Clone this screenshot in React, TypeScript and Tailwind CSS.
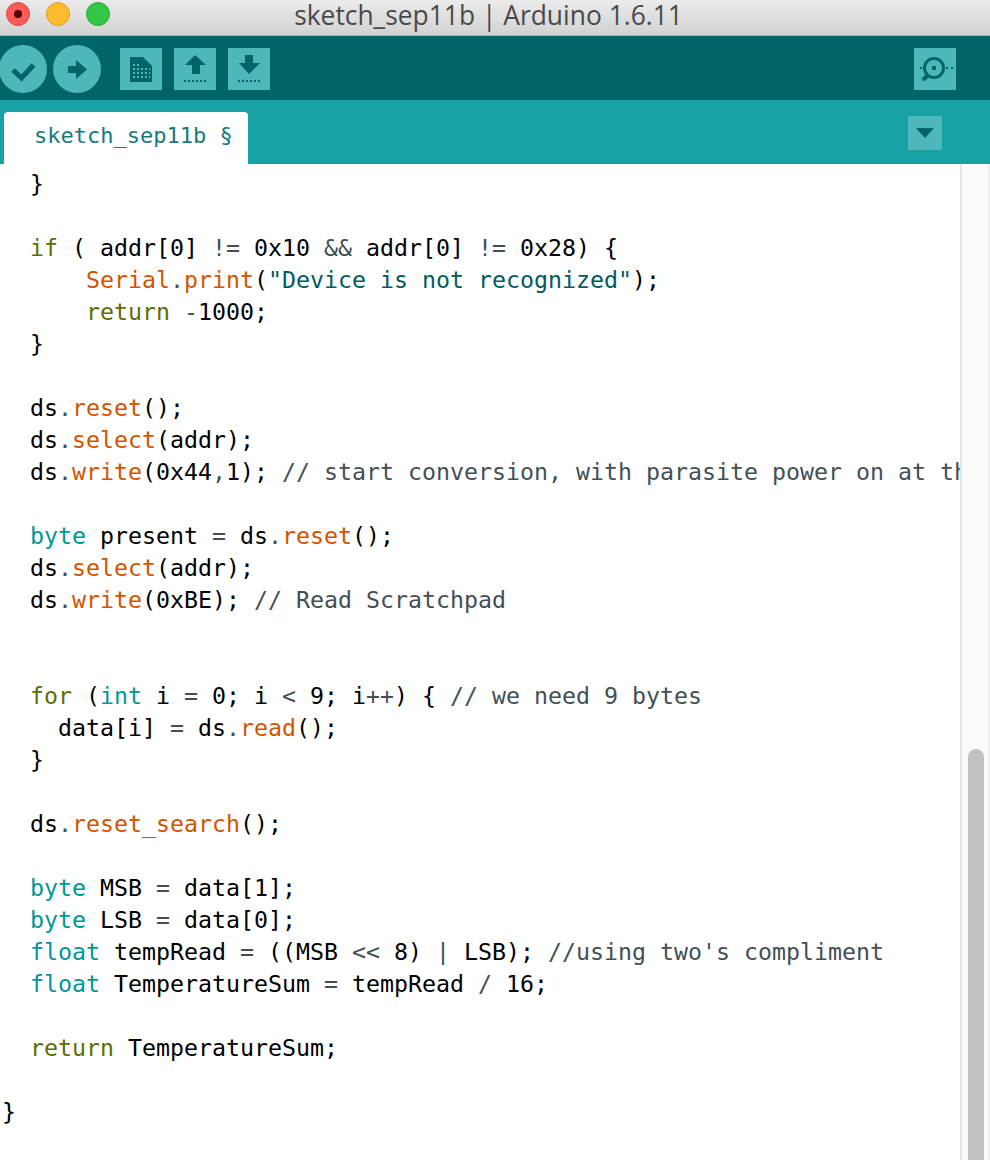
// Arduino IDE 1.6 editor window
const code = [
  "  }",
  "",
  "  if ( addr[0] != 0x10 && addr[0] != 0x28) {",
  '      Serial.print("Device is not recognized");',
  "      return -1000;",
  "  }",
  "",
  "  ds.reset();",
  "  ds.select(addr);",
  "  ds.write(0x44,1); // start conversion, with parasite power on at the end",
  "",
  "  byte present = ds.reset();",
  "  ds.select(addr);",
  "  ds.write(0xBE); // Read Scratchpad",
  "",
  "",
  "  for (int i = 0; i < 9; i++) { // we need 9 bytes",
  "    data[i] = ds.read();",
  "  }",
  "",
  "  ds.reset_search();",
  "",
  "  byte MSB = data[1];",
  "  byte LSB = data[0];",
  "  float tempRead = ((MSB << 8) | LSB); //using two's compliment",
  "  float TemperatureSum = tempRead / 16;",
  "",
  "  return TemperatureSum;",
  "",
  "}",
];

const tokenRe =
  /(\/\/.*$)|("[^"]*")|\b(if|for|return)\b|\b(byte|int|float)\b|\b(Serial|print|reset_search|reset|select|write|read)\b(?=\s*[.(])|(!=|&&|<<|\+\+|[=<|/.,-])/g;

function highlight(line: string) {
  const out: React.ReactNode[] = [];
  let last = 0;
  let m: RegExpExecArray | null;
  tokenRe.lastIndex = 0;
  while ((m = tokenRe.exec(line))) {
    if (m.index > last) out.push(line.slice(last, m.index));
    let cls = "text-[#434f54]";
    if (m[2]) cls = "text-[#005c5f]";
    if (m[3]) cls = "text-[#5e6d03]";
    if (m[4]) cls = "text-[#00979c]";
    if (m[5]) cls = "text-[#d35400]";
    out.push(
      <span key={m.index} className={cls}>
        {m[0]}
      </span>
    );
    last = m.index + m[0].length;
  }
  out.push(line.slice(last));
  return out;
}

function RoundButton({ children }: { children: React.ReactNode }) {
  return (
    <div className="w-12 h-12 shrink-0 rounded-full bg-[#4db7bb] flex items-center justify-center">
      <svg width="48" height="48" viewBox="0 0 48 48" fill="none">
        {children}
      </svg>
    </div>
  );
}

function SquareButton({ children }: { children: React.ReactNode }) {
  return (
    <div className="w-[42px] h-[42px] shrink-0 bg-[#4db7bb]">
      <svg width="42" height="42" viewBox="0 0 42 42" fill="none">
        {children}
      </svg>
    </div>
  );
}

const dark = "#006468";

export default function App() {
  return (
    <div className="w-[990px] h-[1160px] overflow-hidden flex flex-col bg-white font-['DejaVu_Sans_Mono',monospace]">
      {/* title bar */}
      <div className="h-[36px] shrink-0 relative flex items-center justify-center bg-gradient-to-b from-[#ebebeb] to-[#d2d2d2] border-b border-[#b4b4b4]">
        <div className="absolute left-[6px] top-[2px] flex gap-4">
          <div className="w-6 h-6 rounded-full bg-[#fc5b57] border border-[#e2463f] flex items-center justify-center">
            <div className="w-2 h-2 rounded-full bg-[#4d0000]" />
          </div>
          <div className="w-6 h-6 rounded-full bg-[#fdbb2e] border border-[#e09e1e]" />
          <div className="w-6 h-6 rounded-full bg-[#33c748] border border-[#27aa35]" />
        </div>
        <span className="ml-[-13px] pb-[6px] font-['Open_Sans',sans-serif] text-[26.4px] leading-[26px] text-[#4a4a4a] whitespace-nowrap">
          sketch_sep11b | Arduino 1.6.11
        </span>
      </div>

      {/* toolbar */}
      <div className="h-[64px] shrink-0 bg-[#006468] flex items-center">
        <div className="flex items-center gap-[6px] ml-[-1px] mt-[2px]">
          <RoundButton>
            <path d="M14 25l8.5 8 12-13" stroke={dark} strokeWidth="5" />
          </RoundButton>
          <RoundButton>
            <path d="M15 21h8v-6l11 9.5-11 9.5v-6H15z" fill={dark} />
          </RoundButton>
        </div>
        <div className="flex items-center gap-3 ml-[19px] mt-[2px]">
          <SquareButton>
            <path d="M10 9h13l9 9v16H10z" fill={dark} />
            <path
              d="M13 16h2v2h-2zM17 16h2v2h-2zM13 20h2v2h-2zM17 20h2v2h-2zM21 20h2v2h-2zM25 20h2v2h-2zM13 24h2v2h-2zM17 24h2v2h-2zM21 24h2v2h-2zM25 24h2v2h-2zM13 28h2v2h-2zM17 28h2v2h-2zM21 28h2v2h-2zM25 28h2v2h-2zM29 24h1v2h-1zM29 28h1v2h-1zM29 20h1v2h-1z"
              fill="#4db7bb"
            />
          </SquareButton>
          <SquareButton>
            <path d="M21 7l11 10h-6v9h-8v-9h-7z" fill={dark} />
            <path d="M10 33h23" stroke={dark} strokeWidth="2" strokeDasharray="2 2" />
          </SquareButton>
          <SquareButton>
            <path d="M17 7h8v8h7L21 26 11 15h6z" fill={dark} />
            <path d="M10 33h23" stroke={dark} strokeWidth="2" strokeDasharray="2 2" />
          </SquareButton>
        </div>
        <div className="ml-auto mr-[34px] mt-[2px]">
          <SquareButton>
            <circle cx="20" cy="20" r="9.5" stroke={dark} strokeWidth="3" />
            <rect x="18" y="18" width="4" height="4" fill={dark} />
            <path d="M14 27l-5 5" stroke={dark} strokeWidth="4" />
            <path d="M6 20h2M32 20h2M37 20h2" stroke={dark} strokeWidth="2" />
          </SquareButton>
        </div>
      </div>

      {/* tab bar */}
      <div className="h-[64px] shrink-0 bg-[#17a1a5] flex items-end relative">
        <div className="ml-1 w-[244px] h-[52px] bg-white rounded-t-[4px] pl-[30px] pt-[8px] text-[22px] leading-[32px] text-[#17797d] whitespace-nowrap">
          sketch_sep11b §
        </div>
        <div className="absolute left-[908px] top-4 w-[34px] h-[34px] bg-[#4db7bb] flex items-center justify-center">
          <svg width="18" height="10" viewBox="0 0 18 10">
            <path d="M0 0h18l-9 10z" fill={dark} />
          </svg>
        </div>
      </div>

      {/* editor */}
      <div className="flex-1 min-h-0 flex">
        <div className="w-[960px] shrink-0 overflow-hidden pl-[2px] pt-1">
          {code.map((line, i) => (
            <div
              key={i}
              className="h-8 text-[23.25px] leading-[32px] whitespace-pre text-black"
            >
              {highlight(line)}
            </div>
          ))}
        </div>
        <div className="w-[30px] shrink-0 bg-[#fafafa] border-l-2 border-l-[#e8e8e8] border-r-2 border-r-[#efefef] flex flex-col justify-end pl-[6px]">
          <div className="w-4 h-[411px] bg-[#c1c1c1] rounded-t-lg" />
        </div>
      </div>
    </div>
  );
}
